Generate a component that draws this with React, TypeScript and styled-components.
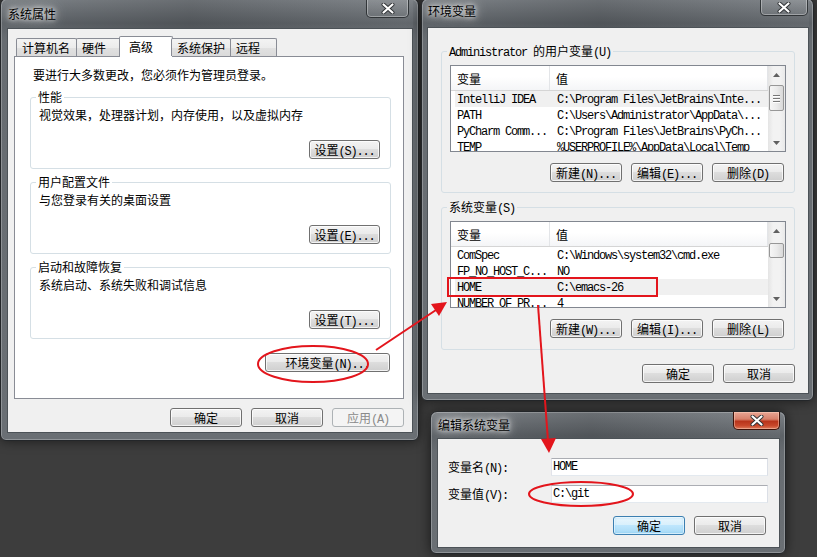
import React from 'react';
import styled, { createGlobalStyle, css } from 'styled-components';

const GlobalStyle = createGlobalStyle`
  html, body {
    margin: 0;
    padding: 0;
    background: #3d3d3d;
  }
  body {
    font: 12px/16px "Noto Sans CJK SC", "Noto Sans", sans-serif;
    color: #000;
  }
  * {
    box-sizing: border-box;
  }
`;

const Desktop = styled.div`
  position: relative;
  width: 817px;
  height: 557px;
  overflow: hidden;
  background: #3d3d3d;
`;

const Mono = styled.span`
  font-family: "Liberation Mono", "DejaVu Sans Mono", monospace;
  font-size: 12px;
  line-height: 1;
  letter-spacing: -1.2px;
`;

// wraps the half-width (ASCII) runs in a monospace face, like SimSun does
const Txt = ({ children }: { children: string }) => (
  <>
    {children
      .split(/([\x20-\x7e]+)/)
      .filter((part) => part !== '')
      .map((part, i) =>
        /[\x20-\x7e]/.test(part) ? <Mono key={i}>{part}</Mono> : <span key={i}>{part}</span>
      )}
  </>
);

/* ---------- window chrome ---------- */

interface FrameProps {
  $x: number;
  $y: number;
  $w: number;
  $h: number;
  $pl: number;
  $pr: number;
  $pb: number;
}

const Frame = styled.div<FrameProps>`
  position: absolute;
  left: ${(p) => p.$x}px;
  top: ${(p) => p.$y}px;
  width: ${(p) => p.$w}px;
  height: ${(p) => p.$h}px;
  display: flex;
  flex-direction: column;
  padding: 0 ${(p) => p.$pr}px ${(p) => p.$pb}px ${(p) => p.$pl}px;
  border: 1px solid #232629;
  border-radius: 7px 7px 6px 6px;
  background: linear-gradient(180deg, #7c8186 0px, #5d6267 24px, #676c71 40px, #6a6f74 100%);
  box-shadow: inset 0 0 0 1px rgba(255, 255, 255, 0.25), 0 0 12px rgba(0, 0, 0, 0.55);
`;

const TitleBar = styled.div<{ $h: number }>`
  flex: none;
  height: ${(p) => p.$h}px;
  display: flex;
  align-items: flex-start;
  justify-content: space-between;
  background: linear-gradient(90deg, rgba(0, 0, 0, 0) 0%, rgba(0, 0, 0, 0.14) 45%, rgba(255, 255, 255, 0.04) 100%);
`;

const TitleText = styled.div<{ $ty: number }>`
  margin: ${(p) => p.$ty}px 0 0 1px;
  line-height: 16px;
  font-size: 12px;
  color: #000;
  text-shadow: 0 0 4px rgba(255, 255, 255, 0.9), 0 0 9px rgba(255, 255, 255, 0.8),
    0 0 14px rgba(255, 255, 255, 0.6);
`;

const CloseButton = styled.div<{ $w: number; $h: number; $mr: number; $red?: boolean }>`
  width: ${(p) => p.$w}px;
  height: ${(p) => p.$h}px;
  margin-right: ${(p) => p.$mr}px;
  display: flex;
  align-items: center;
  justify-content: center;
  border: 1px solid rgba(25, 28, 31, 0.75);
  border-top: none;
  border-radius: 0 0 5px 5px;
  background: linear-gradient(180deg, rgba(255, 255, 255, 0.12), rgba(255, 255, 255, 0.03));
  box-shadow: inset 0 0 0 1px rgba(255, 255, 255, 0.33);
  ${(p) =>
    p.$red &&
    css`
      border-color: #3e1209;
      background: linear-gradient(180deg, #e9a594 0%, #d8816b 42%, #b8341b 55%, #c8482b 80%, #dc7a5c 100%);
      box-shadow: inset 0 0 0 1px rgba(255, 220, 200, 0.45);
    `}
`;

const Client = styled.div`
  flex: 1;
  display: flex;
  flex-direction: column;
  background: #f0f0f0;
  border: 1px solid #4c5257;
`;

const CloseGlyph = () => (
  <svg width="14" height="11" viewBox="0 0 14 11">
    <path d="M2.5 1.5 L11.5 9.5 M11.5 1.5 L2.5 9.5" stroke="#2e3134" strokeWidth="4" strokeLinecap="round" />
    <path d="M2.5 1.5 L11.5 9.5 M11.5 1.5 L2.5 9.5" stroke="#ffffff" strokeWidth="2.2" strokeLinecap="round" />
  </svg>
);

interface WindowProps {
  title: string;
  x: number;
  y: number;
  w: number;
  h: number;
  pl: number;
  pr: number;
  pb: number;
  th: number;
  ty: number;
  close: { w: number; h: number; mr: number; red?: boolean };
  children: React.ReactNode;
}

const Window = ({ title, x, y, w, h, pl, pr, pb, th, ty, close, children }: WindowProps) => (
  <Frame $x={x} $y={y} $w={w} $h={h} $pl={pl} $pr={pr} $pb={pb}>
    <TitleBar $h={th}>
      <TitleText $ty={ty}>{title}</TitleText>
      <CloseButton $w={close.w} $h={close.h} $mr={close.mr} $red={close.red}>
        <CloseGlyph />
      </CloseButton>
    </TitleBar>
    <Client>{children}</Client>
  </Frame>
);

/* ---------- controls ---------- */

const Button = styled.button<{ $w?: number; $focus?: boolean }>`
  flex: none;
  width: ${(p) => p.$w ?? 72}px;
  height: 19px;
  padding: 0;
  border: 1px solid #707070;
  border-radius: 3px;
  background: linear-gradient(180deg, #f3f3f3 0%, #ebebeb 45%, #dddddd 50%, #cfcfcf 100%);
  box-shadow: inset 0 0 0 1px rgba(255, 255, 255, 0.75);
  font: 12px/17px "Noto Sans CJK SC", "Noto Sans", sans-serif;
  color: #000;
  white-space: nowrap;
  ${(p) =>
    p.$focus &&
    css`
      border-color: #3c7fb1;
      background: linear-gradient(180deg, #eaf6fd 0%, #d9f0fc 45%, #bee6fd 50%, #a7d9f5 100%);
      box-shadow: inset 0 0 0 1px rgba(255, 255, 255, 0.6), inset 0 0 3px rgba(72, 180, 240, 0.6);
    `}
  &:disabled {
    border-color: #adb2b5;
    background: #f4f4f4;
    box-shadow: none;
    color: #8a8a8a;
  }
`;

const ActionRow = styled.div<{ $mt?: number; $mr?: number }>`
  display: flex;
  justify-content: flex-end;
  gap: 9px;
  margin-top: ${(p) => p.$mt ?? 0}px;
  margin-right: ${(p) => p.$mr ?? 0}px;
`;

const Group = styled.fieldset<{ $mt?: number; $p: string }>`
  margin: ${(p) => p.$mt ?? 0}px 0 0;
  padding: ${(p) => p.$p};
  border: 1px solid #d5dfe5;
  border-radius: 3px;
  min-inline-size: 0;
`;

const Legend = styled.legend`
  margin-left: -3px;
  padding: 0 2px;
  height: 16px;
  line-height: 16px;
`;

const Desc = styled.div`
  line-height: 16px;
`;

/* ---------- tabs (系统属性) ---------- */

const SysClient = styled.div`
  display: flex;
  flex-direction: column;
  padding: 7px 8px 0 6px;
`;

const TabRow = styled.div`
  display: flex;
  align-items: flex-end;
  height: 20px;
  padding-left: 2px;
  position: relative;
  z-index: 1;
`;

const Tab = styled.div<{ $w: number; $active?: boolean }>`
  flex: none;
  width: ${(p) => p.$w}px;
  height: 18px;
  margin-right: -1px;
  padding-left: 5px;
  border: 1px solid #898c95;
  border-bottom: none;
  border-radius: 2px 2px 0 0;
  background: linear-gradient(180deg, #f3f3f3 0%, #ececec 50%, #e1e1e1 51%, #dadada 100%);
  line-height: 17px;
  ${(p) =>
    p.$active &&
    css`
      height: 21px;
      margin: 0 -2px -1px -2px;
      padding-left: 9px;
      background: #ffffff;
      line-height: 19px;
    `}
`;

const TabPanel = styled.div`
  height: 343px;
  display: flex;
  flex-direction: column;
  padding: 10px 12px 0 15px;
  border: 1px solid #898c95;
  background: #ffffff;
`;

const Intro = styled.div`
  margin-left: 3px;
  line-height: 16px;
`;

/* ---------- list view (环境变量) ---------- */

const EnvClient = styled.div`
  display: flex;
  flex-direction: column;
  padding: 15px 13px 0 13px;
`;

const ListView = styled.div`
  flex: none;
  height: 87px;
  display: flex;
  border: 1px solid #828790;
  background: #ffffff;
`;

const ListBody = styled.div`
  flex: 1;
  min-width: 0;
  overflow: hidden;
`;

const Header = styled.div`
  display: flex;
  height: 25px;
  border-bottom: 1px solid #d5d5d5;
  background: linear-gradient(180deg, #ffffff 0%, #ffffff 45%, #f4f5f7 100%);
`;

const HeaderCell = styled.div<{ $w?: number }>`
  ${(p) => (p.$w ? `width: ${p.$w}px; flex: none;` : 'flex: 1;')}
  padding: 1px 0 0 6px;
  line-height: 24px;
  border-right: 1px solid #e3e5e8;
`;

const Row = styled.div<{ $selected?: boolean }>`
  display: flex;
  height: 16px;
  margin-left: 4px;
  white-space: nowrap;
  background: ${(p) => (p.$selected ? '#f0f0f0' : 'transparent')};
`;

const NameCell = styled(Mono)`
  flex: none;
  width: 95px;
  padding: 1px 0 0 2px;
  line-height: 16px;
  overflow: hidden;
`;

const ValueCell = styled(Mono)`
  flex: 1;
  padding: 1px 0 0 7px;
  line-height: 16px;
  overflow: hidden;
`;

const ScrollBar = styled.div`
  flex: none;
  width: 17px;
  display: flex;
  flex-direction: column;
  background: linear-gradient(90deg, #e4e4e4 0%, #f2f2f2 30%, #f2f2f2 70%, #e9e9e9 100%);
`;

const ScrollArrow = styled.div`
  flex: none;
  height: 17px;
  display: flex;
  align-items: center;
  justify-content: center;
`;

const ScrollTrack = styled.div`
  flex: 1;
`;

const Thumb = styled.div<{ $top: number; $h: number }>`
  margin: ${(p) => p.$top}px 0 0 1px;
  width: 15px;
  height: ${(p) => p.$h}px;
  display: flex;
  flex-direction: column;
  align-items: center;
  justify-content: center;
  gap: 2px;
  border: 1px solid #979797;
  border-radius: 2px;
  background: linear-gradient(90deg, #f6f6f6 0%, #ebebeb 50%, #d9d9d9 100%);
`;

const Grip = styled.span`
  width: 7px;
  height: 1px;
  background: #777;
  box-shadow: 0 1px 0 #fff;
`;

const Arrow = ({ down }: { down?: boolean }) => (
  <svg width="7" height="4" viewBox="0 0 7 4">
    <path d={down ? 'M0 0 H7 L3.5 4 Z' : 'M0 4 H7 L3.5 0 Z'} fill="#606060" />
  </svg>
);

interface VarListProps {
  rows: string[][];
  selected: number;
  thumbTop: number;
  thumbHeight: number;
  grip?: boolean;
}

const VarList = ({ rows, selected, thumbTop, thumbHeight, grip }: VarListProps) => (
  <ListView>
    <ListBody>
      <Header>
        <HeaderCell $w={99}>变量</HeaderCell>
        <HeaderCell>值</HeaderCell>
      </Header>
      {rows.map(([name, value], i) => (
        <Row key={name} $selected={i === selected}>
          <NameCell>{name}</NameCell>
          <ValueCell>{value}</ValueCell>
        </Row>
      ))}
    </ListBody>
    <ScrollBar>
      <ScrollArrow>
        <Arrow />
      </ScrollArrow>
      <ScrollTrack>
        <Thumb $top={thumbTop} $h={thumbHeight}>
          {grip && (
            <>
              <Grip />
              <Grip />
              <Grip />
            </>
          )}
        </Thumb>
      </ScrollTrack>
      <ScrollArrow>
        <Arrow down />
      </ScrollArrow>
    </ScrollBar>
  </ListView>
);

/* ---------- edit dialog (编辑系统变量) ---------- */

const EditClient = styled.div`
  display: flex;
  flex-direction: column;
  padding: 19px 11px 0 10px;
`;

const FieldGrid = styled.div`
  display: grid;
  grid-template-columns: 103px 1fr;
  row-gap: 9px;
  align-items: center;
`;

const FieldLabel = styled.label`
  line-height: 16px;
`;

const TextInput = styled.input`
  height: 18px;
  width: 100%;
  margin: 0;
  padding: 0 0 0 1px;
  border: 1px solid;
  border-color: #abadb3 #dbdfe6 #e3e9ef #e2e3ea;
  background: #ffffff;
  font-family: "Liberation Mono", "DejaVu Sans Mono", monospace;
  font-size: 12px;
  letter-spacing: -1.2px;
  color: #000;
  outline: none;
`;

/* ---------- red annotations ---------- */

const Marks = styled.svg`
  position: absolute;
  left: 0;
  top: 0;
  z-index: 10;
  pointer-events: none;
`;

const RED = '#e3151c';

const Annotations = () => (
  <Marks width="817" height="557" viewBox="0 0 817 557">
    <g fill="none" stroke={RED} strokeWidth="2">
      <ellipse cx="313" cy="364" rx="55" ry="18" />
      <line x1="376" y1="350" x2="436" y2="310" />
      <rect x="448" y="278" width="209" height="18" />
      <line x1="538" y1="305" x2="548" y2="441" />
      <ellipse cx="581" cy="494" rx="52" ry="12" />
    </g>
    <polygon points="447,302 439,316 431,304" fill={RED} />
    <polygon points="549,453 541,439 556,438" fill={RED} />
  </Marks>
);

/* ---------- data ---------- */

const userVars = [
  ['IntelliJ IDEA', 'C:\\Program Files\\JetBrains\\Inte...'],
  ['PATH', 'C:\\Users\\Administrator\\AppData\\...'],
  ['PyCharm Comm...', 'C:\\Program Files\\JetBrains\\PyCh...'],
  ['TEMP', '%USERPROFILE%\\AppData\\Local\\Temp'],
];

const sysVars = [
  ['ComSpec', 'C:\\Windows\\system32\\cmd.exe'],
  ['FP_NO_HOST_C...', 'NO'],
  ['HOME', 'C:\\emacs-26'],
  ['NUMBER_OF_PR...', '4'],
];

const tabs = [
  { label: '计算机名', w: 61 },
  { label: '硬件', w: 46 },
  { label: '高级', w: 54, active: true },
  { label: '系统保护', w: 60 },
  { label: '远程', w: 47 },
];

const App = () => (
  <Desktop>
    <GlobalStyle />

    <Window
      title="系统属性"
      x={0}
      y={-2}
      w={419}
      h={443}
      pl={6}
      pr={5}
      pb={7}
      th={29}
      ty={7}
      close={{ w: 43, h: 19, mr: 4 }}
    >
      <SysClient>
        <TabRow>
          {tabs.map((t) => (
            <Tab key={t.label} $w={t.w} $active={t.active}>
              {t.label}
            </Tab>
          ))}
        </TabRow>
        <TabPanel>
          <Intro>要进行大多数更改，您必须作为管理员登录。</Intro>
          <Group $mt={6} $p="2px 10px 9px 8px">
            <Legend>性能</Legend>
            <Desc>视觉效果，处理器计划，内存使用，以及虚拟内存</Desc>
            <ActionRow $mt={17}>
              <Button $w={71}>
                <Txt>设置(S)...</Txt>
              </Button>
            </ActionRow>
          </Group>
          <Group $mt={5} $p="2px 10px 9px 8px">
            <Legend>用户配置文件</Legend>
            <Desc>与您登录有关的桌面设置</Desc>
            <ActionRow $mt={17}>
              <Button $w={71}>
                <Txt>设置(E)...</Txt>
              </Button>
            </ActionRow>
          </Group>
          <Group $mt={5} $p="2px 10px 9px 8px">
            <Legend>启动和故障恢复</Legend>
            <Desc>系统启动、系统失败和调试信息</Desc>
            <ActionRow $mt={17}>
              <Button $w={71}>
                <Txt>设置(T)...</Txt>
              </Button>
            </ActionRow>
          </Group>
          <ActionRow $mt={14} $mr={1}>
            <Button $w={125}>
              <Txt>环境变量(N)...</Txt>
            </Button>
          </ActionRow>
        </TabPanel>
        <ActionRow $mt={9}>
          <Button>确定</Button>
          <Button>取消</Button>
          <Button disabled>
            <Txt>应用(A)</Txt>
          </Button>
        </ActionRow>
      </SysClient>
    </Window>

    <Window
      title="环境变量"
      x={421}
      y={-2}
      w={393}
      h={403}
      pl={5}
      pr={4}
      pb={6}
      th={28}
      ty={4}
      close={{ w: 48, h: 17, mr: 1 }}
    >
      <EnvClient>
        <Group $p="6px 8px 10px 8px">
          <Legend>
            <Txt>Administrator 的用户变量(U)</Txt>
          </Legend>
          <VarList rows={userVars} selected={0} thumbTop={2} thumbHeight={26} grip />
          <ActionRow $mt={11} $mr={2}>
            <Button>
              <Txt>新建(N)...</Txt>
            </Button>
            <Button>
              <Txt>编辑(E)...</Txt>
            </Button>
            <Button>
              <Txt>删除(D)</Txt>
            </Button>
          </ActionRow>
        </Group>
        <Group $mt={6} $p="6px 8px 11px 8px">
          <Legend>
            <Txt>系统变量(S)</Txt>
          </Legend>
          <VarList rows={sysVars} selected={2} thumbTop={4} thumbHeight={15} />
          <ActionRow $mt={11} $mr={2}>
            <Button>
              <Txt>新建(W)...</Txt>
            </Button>
            <Button>
              <Txt>编辑(I)...</Txt>
            </Button>
            <Button>
              <Txt>删除(L)</Txt>
            </Button>
          </ActionRow>
        </Group>
        <ActionRow $mt={14}>
          <Button>确定</Button>
          <Button>取消</Button>
        </ActionRow>
      </EnvClient>
    </Window>

    <Window
      title="编辑系统变量"
      x={430}
      y={411}
      w={356}
      h={143}
      pl={6}
      pr={5}
      pb={5}
      th={26}
      ty={5}
      close={{ w: 47, h: 18, mr: 0, red: true }}
    >
      <EditClient>
        <FieldGrid>
          <FieldLabel>
            <Txt>变量名(N):</Txt>
          </FieldLabel>
          <TextInput readOnly value="HOME" />
          <FieldLabel>
            <Txt>变量值(V):</Txt>
          </FieldLabel>
          <TextInput readOnly value="C:\git" />
        </FieldGrid>
        <ActionRow $mt={13} $mr={2}>
          <Button $focus>确定</Button>
          <Button>取消</Button>
        </ActionRow>
      </EditClient>
    </Window>

    <Annotations />
  </Desktop>
);

export default App;
